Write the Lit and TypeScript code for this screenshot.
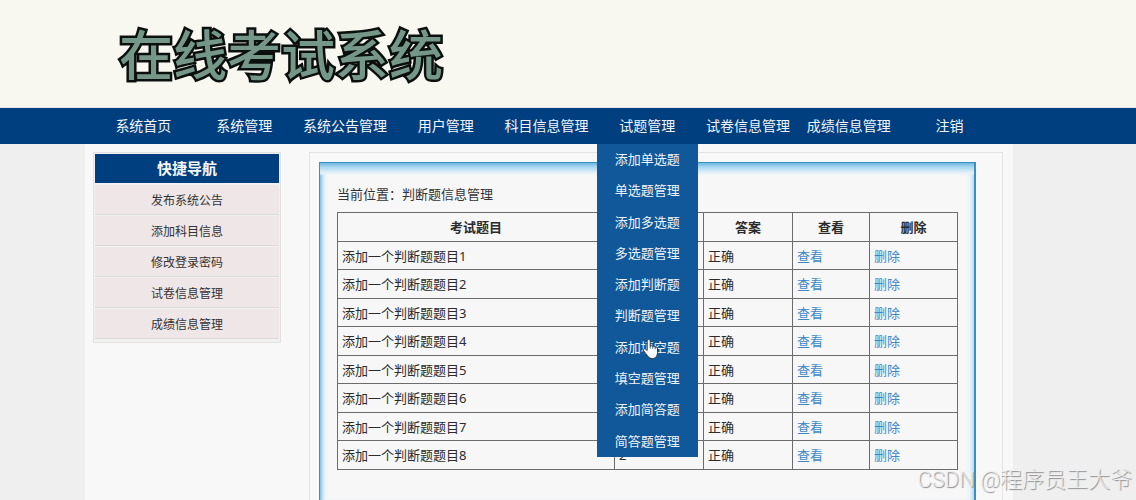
import { LitElement, html, css } from "lit";
import { customElement } from "lit/decorators.js";

interface MenuEntry {
  label: string;
  children?: string[];
}

const MENU: MenuEntry[] = [
  { label: "系统首页" },
  { label: "系统管理" },
  { label: "系统公告管理" },
  { label: "用户管理" },
  { label: "科目信息管理" },
  {
    label: "试题管理",
    children: [
      "添加单选题",
      "单选题管理",
      "添加多选题",
      "多选题管理",
      "添加判断题",
      "判断题管理",
      "添加填空题",
      "填空题管理",
      "添加简答题",
      "简答题管理",
    ],
  },
  { label: "试卷信息管理" },
  { label: "成绩信息管理" },
  { label: "注销" },
];

const SHORTCUTS = ["发布系统公告", "添加科目信息", "修改登录密码", "试卷信息管理", "成绩信息管理"];

const QUESTIONS = [1, 2, 3, 4, 5, 6, 7, 8].map((n) => ({
  title: `添加一个判断题题目${n}`,
  score: 2,
  answer: "正确",
}));

@customElement("exam-nav")
class ExamNav extends LitElement {
  static styles = css`
    :host {
      display: block;
      background: #003f7f;
      padding: 0 136px 0 93px;
    }
    .bar {
      display: grid;
      grid-template-columns: repeat(9, 1fr);
      margin: 0;
      padding: 0;
      list-style: none;
    }
    .entry {
      position: relative;
    }
    .link {
      display: block;
      line-height: 36px;
      font-size: 14px;
      text-align: center;
      white-space: nowrap;
      color: #f2f6fa;
      text-decoration: none;
    }
    .menu {
      position: absolute;
      top: 100%;
      left: 0;
      right: 0;
      z-index: 2;
      display: grid;
      grid-auto-rows: 1fr;
      min-height: 313px;
      margin: 0;
      padding: 0;
      list-style: none;
      background: #105899;
    }
    .item {
      display: block;
      line-height: 31px;
      font-size: 13px;
      text-align: center;
      color: #eef4fa;
      text-decoration: none;
    }
    .pointer {
      position: absolute;
      left: 45px;
      top: 194px;
      width: 17px;
      height: 22px;
    }
  `;

  render() {
    return html`
      <nav>
        <ul class="bar">
          ${MENU.map(
            (entry) => html`<li class="entry">
              <a class="link" href="#">${entry.label}</a>
              ${entry.children
                ? html`<ul class="menu">
                    ${entry.children.map((c) => html`<li><a class="item" href="#">${c}</a></li>`)}
                    <svg class="pointer" viewBox="0 0 17 22" aria-hidden="true">
                      <path
                        d="M5.2 12.500V3.200c0-2.300 3-2.300 3 0v5.200c.5-1 2.300-.8 2.600.4.7-.8 2.200-.5 2.400.6 1-.5 2.300.1 2.300 1.400v3.400c0 3.400-1.800 6.300-5 6.300-2.800 0-4.300-1.400-5.500-3.400L1.500 12.700c-.8-1.500.9-2.600 2-1.600z"
                        fill="#fff"
                        stroke="#26384e"
                        stroke-width="1"
                        stroke-linejoin="round"
                      />
                      <path d="M8.200 8.400v2.300M10.800 8.900v2M13.200 9.500v1.800" fill="none" stroke="#26384e" stroke-width=".8" />
                    </svg>
                  </ul>`
                : null}
            </li>`
          )}
        </ul>
      </nav>
    `;
  }
}

@customElement("exam-shortcuts")
class ExamShortcuts extends LitElement {
  static styles = css`
    :host {
      display: block;
    }
    .box {
      border: 1px solid #e2e2e2;
      padding: 1px 1px 2px;
      background: #f1f1f1;
    }
    .title {
      margin: 0 0 2px;
      background: #003f7f;
      color: #f4f8fb;
      font-size: 15px;
      font-weight: 700;
      line-height: 29px;
      text-align: center;
    }
    .list {
      margin: 0;
      padding: 0;
      list-style: none;
    }
    .item {
      display: block;
      margin-bottom: 1px;
      border-bottom: 1px solid #dadada;
      background: #eee6e7;
      color: #333;
      font-size: 12px;
      line-height: 27px;
      padding-top: 2px;
      text-align: center;
      text-decoration: none;
    }
  `;

  render() {
    return html`
      <div class="box">
        <h2 class="title">快捷导航</h2>
        <ul class="list">
          ${SHORTCUTS.map((s) => html`<li><a class="item" href="#">${s}</a></li>`)}
        </ul>
      </div>
    `;
  }
}

@customElement("exam-questions")
class ExamQuestions extends LitElement {
  static styles = css`
    :host {
      display: block;
    }
    .frame {
      border: 1px solid #3d8fc2;
      border-right-width: 2px;
      padding: 22px 16px 41px 17px;
      background: linear-gradient(#6db8e2, #a9d7ef 4px, #e6f2f9 10px, #f7f7f700 13px),
        linear-gradient(to right, #7dbfe4, #cfe6f4 3px, #f0f6fa 6px, #f7f7f700 8px),
        linear-gradient(to left, #b7dcf0, #e8f3fa 4px, #f7f7f700 8px),
        linear-gradient(to top, #6db8e2, #a9d7ef 4px, #e6f2f9 10px, #f7f7f700 13px), #f7f7f7;
    }
    .crumb {
      margin: 0 0 9px;
      font-size: 13px;
      line-height: 18px;
      color: #333;
    }
    .grid {
      width: 100%;
      table-layout: fixed;
      border-collapse: collapse;
      font-size: 13px;
      line-height: 18px;
      color: #2b2b2b;
    }
    .score,
    .answer {
      width: 89px;
    }
    .view {
      width: 77px;
    }
    .remove {
      width: 88px;
    }
    .cell {
      box-sizing: border-box;
      border: 1px solid #6c6c6c;
      padding: 5px 4px 4px;
      text-align: left;
    }
    .row:nth-child(even) .cell {
      padding-bottom: 5px;
    }
    .head {
      padding: 5px 4px;
      text-align: center;
      font-weight: 700;
    }
    .action {
      color: #3d87c7;
      text-decoration: none;
    }
  `;

  render() {
    return html`
      <section class="frame">
        <p class="crumb">当前位置：判断题信息管理</p>
        <table class="grid">
          <thead>
            <tr>
              <th class="cell head">考试题目</th>
              <th class="cell head score">分值</th>
              <th class="cell head answer">答案</th>
              <th class="cell head view">查看</th>
              <th class="cell head remove">删除</th>
            </tr>
          </thead>
          <tbody>
            ${QUESTIONS.map(
              (q) => html`<tr class="row">
                <td class="cell">${q.title}</td>
                <td class="cell">${q.score}</td>
                <td class="cell">${q.answer}</td>
                <td class="cell"><a class="action" href="#">查看</a></td>
                <td class="cell"><a class="action" href="#">删除</a></td>
              </tr>`
            )}
          </tbody>
        </table>
      </section>
    `;
  }
}

@customElement("app-root")
class AppRoot extends LitElement {
  static styles = css`
    :host {
      display: flex;
      flex-direction: column;
      position: relative;
      height: 100vh;
      overflow: hidden;
      background: #efefef;
      font-family: "Noto Sans", "Noto Sans CJK SC", sans-serif;
    }
    .banner {
      flex: none;
      box-sizing: border-box;
      padding: 17px 119px 18px;
      background: #f8f7f0;
      border-bottom: 1px solid #dfe4e4;
    }
    .brand {
      margin: 0;
      font-family: "Noto Sans CJK SC", sans-serif;
      font-size: 54px;
      font-weight: 500;
      line-height: 72px;
      color: #759788;
      -webkit-text-stroke: 5px #0b0f0d;
      paint-order: stroke fill;
      stroke-linejoin: round;
    }
    .nav {
      flex: none;
    }
    .page {
      flex: 1 0 auto;
      display: flex;
      align-items: flex-start;
      gap: 28px;
      margin: 0 123px 0 85px;
      padding: 8px 10px 0 8px;
      background: #f8f8f8;
    }
    .side {
      flex: none;
      width: 188px;
    }
    .panel {
      flex: 1;
      border: 1px solid #e4e4e4;
      padding: 9px 26px 9px 9px;
    }
    .mark {
      position: absolute;
      right: 4px;
      bottom: 6px;
      font-family: Roboto, "Noto Sans CJK SC", sans-serif;
      font-size: 22px;
      font-weight: 300;
      line-height: 28px;
      color: #f4f4f4cc;
      text-shadow: 1px 1px 1px #8c8c8c;
    }
  `;

  render() {
    return html`
      <header class="banner"><h1 class="brand">在线考试系统</h1></header>
      <exam-nav class="nav"></exam-nav>
      <main class="page">
        <exam-shortcuts class="side"></exam-shortcuts>
        <exam-questions class="panel"></exam-questions>
      </main>
      <div class="mark">CSDN @程序员王大爷</div>
    `;
  }
}
